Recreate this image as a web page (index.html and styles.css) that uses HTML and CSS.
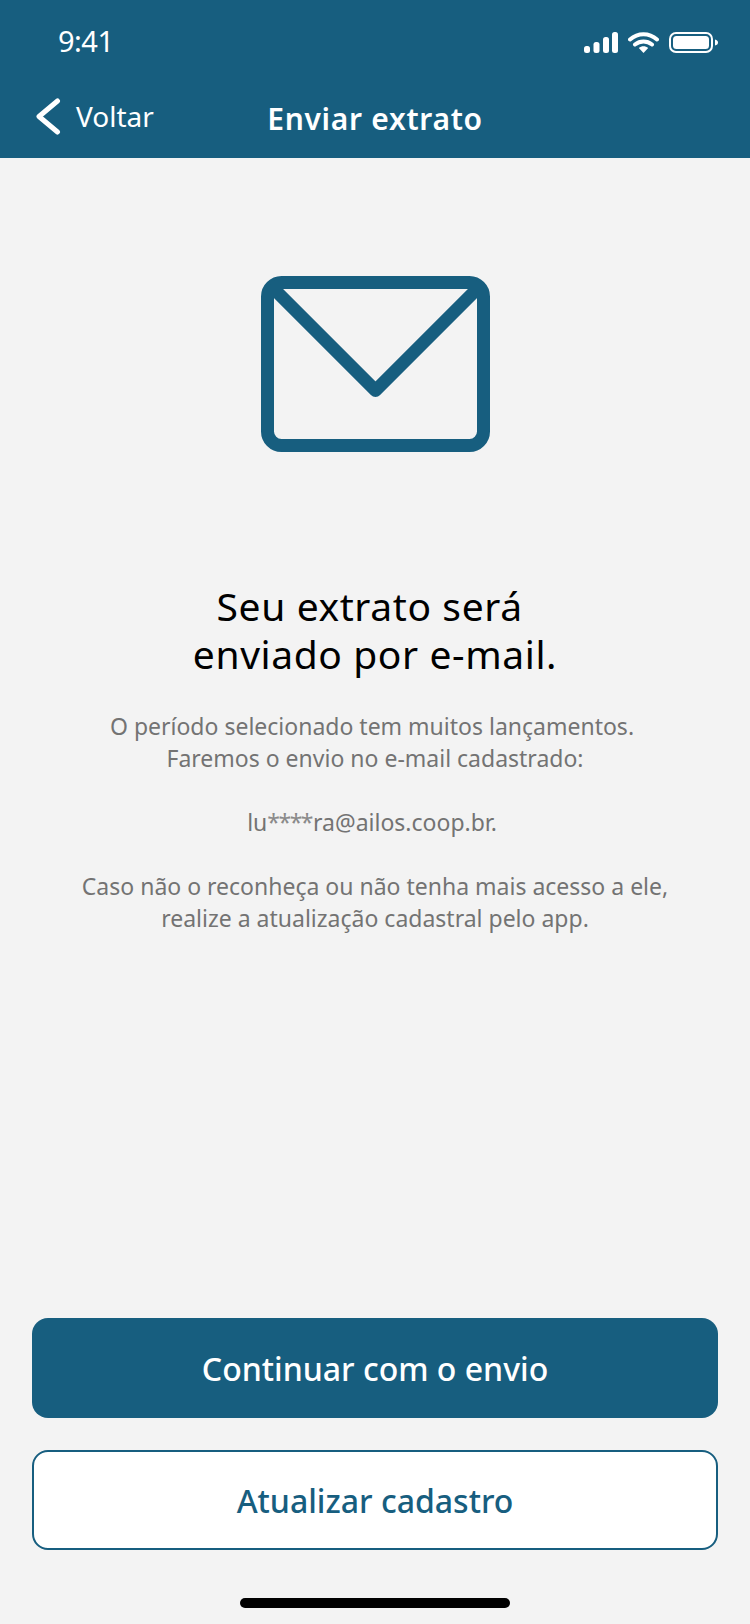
FILE: index.html
```html
<!DOCTYPE html>
<html lang="pt-BR">
<head>
<meta charset="utf-8">
<title>Enviar extrato</title>
<link rel="stylesheet" href="styles.css">
</head>
<body>
<div class="screen">
  <header class="top">
    <div class="status">
      <span class="time">9:41</span>
      <div class="status-icons">
        <svg class="signal" width="34" height="21" viewBox="0 0 34 21"><rect x="0" y="14" width="6" height="7" rx="2.5"/><rect x="9.5" y="10" width="6" height="11" rx="2.5"/><rect x="19" y="5" width="6" height="16" rx="2.5"/><rect x="28" y="0" width="6" height="21" rx="2.5"/></svg>
        <svg class="wifi" width="31" height="21" viewBox="0 0 31 21"><path d="M2 7.5C10 .5 21 .5 29 7.5M7 12.5C12 8.500 19 8.500 24 12.500" fill="none" stroke="#fff" stroke-width="4" stroke-linecap="round"/><path d="M10.800 16L15.500 21 20.200 16C17.500 13.700 13.500 13.700 10.800 16Z" fill="#fff"/></svg>
        <svg class="battery" width="49" height="21" viewBox="0 0 49 21"><rect x="1" y="1" width="42" height="19" rx="6" fill="none" stroke="#fff" stroke-width="2"/><rect x="4" y="4" width="36" height="13" rx="3.500" fill="#fff"/><path d="M46 7.500c2 .5 3 1.500 3 3s-1 2.500-3 3z" fill="#fff"/></svg>
      </div>
    </div>
    <nav class="nav">
      <a class="back">
        <svg width="26" height="37" viewBox="0 0 26 37"><path d="M22.500 3L4 18.500 22.500 34" fill="none" stroke="#fff" stroke-width="5" stroke-linecap="round" stroke-linejoin="round"/></svg>
        <span class="back-label">Voltar</span>
      </a>
      <h1 class="nav-title">Enviar extrato</h1>
      <span></span>
    </nav>
  </header>
  <main class="content">
    <svg class="envelope" width="229" height="176" viewBox="0 0 229 176"><rect x="6.500" y="6.500" width="216" height="163" rx="14" fill="none" stroke="#175e7f" stroke-width="13"/><path d="M9 9L114.500 114.500 220 9" fill="none" stroke="#175e7f" stroke-width="13" stroke-linejoin="round"/></svg>
    <h2 class="headline">Seu extrato será&nbsp;<br>enviado por e-mail.</h2>
    <p class="copy">O período selecionado tem muitos lançamentos.&nbsp;<br>Faremos o envio no e-mail cadastrado:</p>
    <p class="copy">lu<span class="mask">****</span>ra@ailos.coop.br.&nbsp;</p>
    <p class="copy">Caso não o reconheça ou não tenha mais acesso a ele,<br>realize a atualização cadastral pelo app.</p>
  </main>
  <footer class="actions">
    <button class="btn primary">Continuar com o envio</button>
    <button class="btn secondary">Atualizar cadastro</button>
    <div class="home"></div>
  </footer>
</div>
</body>
</html>
```
FILE: styles.css
```css
* { box-sizing: border-box; }
html, body { margin: 0; padding: 0; }
body { background: #f3f3f3; font-family: "Noto Sans", "Open Sans", sans-serif; }
.screen { width: 750px; height: 1624px; display: flex; flex-direction: column; overflow: hidden; }
.top { height: 158px; background: #175e7f; color: #fff; flex: none; }
.status { height: 84px; display: flex; justify-content: space-between; align-items: flex-start; padding: 26px 32px 0 58px; }
.time { font-size: 29px; line-height: 30px; letter-spacing: -.5px; }
.status-icons { display: flex; gap: 10px; padding-top: 6px; }
.status-icons svg { display: block; fill: #fff; }
.nav { display: grid; grid-template-columns: 1fr auto 1fr; align-items: center; height: 60px; margin-top: 4px; padding-left: 35px; padding-right: 35px; }
.back { display: flex; align-items: center; gap: 15px; font-size: 28px; }
.back svg { display: block; margin-top: -3px; }
.back-label { margin-top: -4px; }
.nav-title { margin: 0; font-size: 30px; font-weight: 600; letter-spacing: .7px; white-space: nowrap; }
.content { flex: 1; display: flex; flex-direction: column; align-items: center; padding-top: 118px; text-align: center; }
.envelope { display: block; }
.headline { margin: 130px 0 0; font-size: 39px; line-height: 48px; font-weight: 400; color: #000; letter-spacing: .6px; }
.copy { margin: 0; font-size: 23px; line-height: 32px; color: #737373; }
.mask { letter-spacing: -1.500px; margin-right: 1px; color: #8a8a8a; }
.headline + .copy { margin-top: 32px; }
.copy + .copy { margin-top: 32px; }
.actions { flex: none; display: flex; flex-direction: column; align-items: center; padding: 0 32px; }
.btn { width: 686px; height: 100px; border-radius: 16px; font-family: inherit; font-size: 32px; font-weight: 500; }
.primary { background: #175e7f; color: #fff; border: 0; }
.secondary { background: #fff; color: #175e7f; border: 2px solid #175e7f; margin-top: 32px; font-weight: 500; }
.home { width: 270px; height: 10px; border-radius: 5px; background: #000; margin: 48px 0 16px; }
```
